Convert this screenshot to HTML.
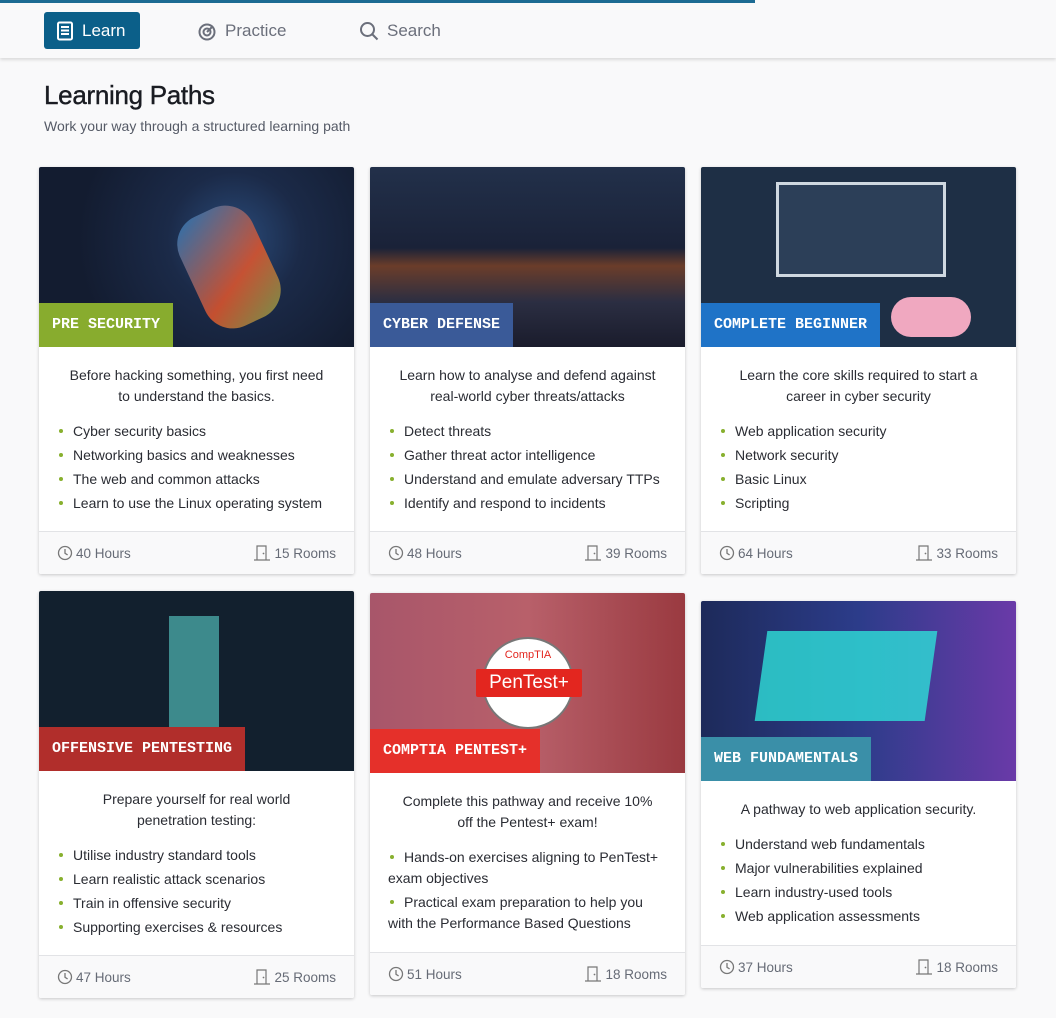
<!DOCTYPE html>
<html><head><meta charset="utf-8"><style>
*{box-sizing:border-box;margin:0;padding:0}
body{width:1056px;height:1018px;background:#f9f9fa;font-family:"Liberation Sans",sans-serif;position:relative;overflow:hidden;color:#1f2024}
.top{position:absolute;left:0;top:0;width:1056px;height:58px;background:#f9f9fa;border-top:3px solid #1c6b93;box-shadow:0 2px 3px rgba(0,0,0,.12)}
.top:after{content:"";position:absolute;left:755px;right:0;top:-3px;height:3px;background:#f9f9fa}
.nav{position:absolute;top:12px;height:37px;display:flex;align-items:center;font-size:17px;color:#6b6f7b}
.learn{left:44px;width:96px;background:#0b5f89;border-radius:3px;color:#fff;padding-left:12px}
h1{position:absolute;left:44px;top:80px;font-size:26px;font-weight:normal;color:#1a1c22;letter-spacing:-.3px;-webkit-text-stroke:.4px #1a1c22}
.sub{position:absolute;left:44px;top:118px;font-size:14px;color:#555a66}
.card{position:absolute;width:315px;background:#fff;box-shadow:0 1px 3px rgba(0,0,0,.2);border-radius:2px;overflow:hidden}
.img{height:180px;position:relative;overflow:hidden}
.lab{position:absolute;left:0;bottom:0;height:44px;line-height:44px;padding:0 13px;color:#fff;font-family:"Liberation Mono",monospace;font-weight:bold;font-size:15px;white-space:nowrap}
.desc{text-align:center;font-size:14px;line-height:21px;padding:18px 28px 0;color:#2a2c33}
ul{list-style:none;padding:14px 18px 0;font-size:14px;line-height:21px;color:#2a2c33}
li{margin-bottom:3px}
li:before{content:"";display:inline-block;vertical-align:middle;margin:0 10px 3px 2px;width:4px;height:4px;border-radius:50%;background:#88b02e}
.ft{position:absolute;left:0;right:0;bottom:0;height:43px;border-top:1px solid #e2e3e6;background:#f9f9fa;font-size:13.5px;color:#666b76;display:flex;justify-content:space-between;align-items:center;padding:0 18px}
.ft span{display:flex;align-items:center;gap:3px}
</style></head><body>
<svg width="0" height="0" style="position:absolute"><defs>
<symbol id="ck" viewBox="0 0 16 16"><circle cx="8" cy="8" r="6.5" fill="none" stroke="#777" stroke-width="1.3"/><path d="M8 4v4.3l2.6 1.6" fill="none" stroke="#777" stroke-width="1.3"/></symbol>
<symbol id="dr" viewBox="0 0 18 16"><path d="M1 15h16M4 15V1h9v14" fill="none" stroke="#777" stroke-width="1.2"/><circle cx="10.5" cy="8.5" r=".9" fill="#777"/></symbol>
</defs></svg>
<div class="top"></div>
<div class="nav learn"><svg width="18" height="20" viewBox="0 0 18 20"><rect x="2" y="1.5" width="14" height="17" rx="1.5" fill="none" stroke="#fff" stroke-width="2"/><path d="M5 6h8M5 9.5h8M5 13h8" stroke="#fff" stroke-width="2"/></svg><span style="margin-left:8px">Learn</span></div>
<div class="nav" style="left:197px"><svg width="20" height="20" viewBox="0 0 20 20"><circle cx="10" cy="11" r="7.5" fill="none" stroke="#6b6f7b" stroke-width="2"/><circle cx="10" cy="11" r="3.5" fill="none" stroke="#6b6f7b" stroke-width="2"/><path d="M10 11l6-6" stroke="#6b6f7b" stroke-width="2"/></svg><span style="margin-left:8px">Practice</span></div>
<div class="nav" style="left:359px"><svg width="20" height="20" viewBox="0 0 20 20"><circle cx="8.5" cy="8.5" r="6.5" fill="none" stroke="#6b6f7b" stroke-width="2"/><path d="M13.5 13.5l5 5" stroke="#6b6f7b" stroke-width="2"/></svg><span style="margin-left:8px">Search</span></div>
<h1>Learning Paths</h1>
<div class="sub">Work your way through a structured learning path</div>

<div class="card" style="left:39px;top:167px;height:407px">
<div class="img" style="background:radial-gradient(circle at 62% 40%,#2a4b7a 0,#1b2a48 30%,#131c30 70%)"><div style="position:absolute;left:150px;top:40px;width:80px;height:120px;background:linear-gradient(150deg,#2b7cc0,#e2562c 60%,#8aa04a);transform:rotate(-25deg);border-radius:30px;opacity:.85"></div><div class="lab" style="background:#88ac2e">PRE SECURITY</div></div>
<div class="desc">Before hacking something, you first need to understand the basics.</div>
<ul><li>Cyber security basics</li><li>Networking basics and weaknesses</li><li>The web and common attacks</li><li>Learn to use the Linux operating system</li></ul>
<div class="ft"><span><svg width="16" height="16"><use href="#ck"/></svg>40 Hours</span><span><svg width="18" height="16"><use href="#dr"/></svg>15 Rooms</span></div></div>

<div class="card" style="left:370px;top:167px;height:407px">
<div class="img" style="background:linear-gradient(180deg,#22304a 0,#1a2238 45%,#6b3d2a 55%,#2b2e42 75%,#1a1c2c)"><div class="lab" style="background:#3a5a98">CYBER DEFENSE</div></div>
<div class="desc">Learn how to analyse and defend against real-world cyber threats/attacks</div>
<ul><li>Detect threats</li><li>Gather threat actor intelligence</li><li>Understand and emulate adversary TTPs</li><li>Identify and respond to incidents</li></ul>
<div class="ft"><span><svg width="16" height="16"><use href="#ck"/></svg>48 Hours</span><span><svg width="18" height="16"><use href="#dr"/></svg>39 Rooms</span></div></div>

<div class="card" style="left:701px;top:167px;height:407px">
<div class="img" style="background:#1e2f45"><div style="position:absolute;left:75px;top:15px;width:170px;height:95px;background:#2c3f58;border:3px solid #cfd8e0"></div><div style="position:absolute;left:190px;top:130px;width:80px;height:40px;background:#f0a8c0;border-radius:20px"></div><div class="lab" style="background:#1f73c7">COMPLETE BEGINNER</div></div>
<div class="desc">Learn the core skills required to start a career in cyber security</div>
<ul><li>Web application security</li><li>Network security</li><li>Basic Linux</li><li>Scripting</li></ul>
<div class="ft"><span><svg width="16" height="16"><use href="#ck"/></svg>64 Hours</span><span><svg width="18" height="16"><use href="#dr"/></svg>33 Rooms</span></div></div>

<div class="card" style="left:39px;top:591px;height:407px">
<div class="img" style="background:#12202e"><div style="position:absolute;left:130px;top:25px;width:50px;height:115px;background:#3d8a8c"></div><div class="lab" style="background:#b12e2b">OFFENSIVE PENTESTING</div></div>
<div class="desc">Prepare yourself for real world penetration testing:</div>
<ul><li>Utilise industry standard tools</li><li>Learn realistic attack scenarios</li><li>Train in offensive security</li><li>Supporting exercises &amp; resources</li></ul>
<div class="ft"><span><svg width="16" height="16"><use href="#ck"/></svg>47 Hours</span><span><svg width="18" height="16"><use href="#dr"/></svg>25 Rooms</span></div></div>

<div class="card" style="left:370px;top:593px;height:402px">
<div class="img" style="background:linear-gradient(90deg,#a8566a,#b8606a 50%,#9a3a40)"><div style="position:absolute;left:112px;top:44px;width:92px;height:92px;border-radius:50%;background:#fff;border:2px solid #777"></div><div style="position:absolute;left:106px;top:76px;width:106px;height:28px;background:#e3261f;color:#fff;font-size:19px;text-align:center;line-height:28px;border-radius:2px">PenTest+</div><div style="position:absolute;left:120px;top:56px;width:76px;text-align:center;color:#e3261f;font-size:11px">CompTIA</div><div class="lab" style="background:#e5302a">COMPTIA PENTEST+</div></div>
<div class="desc">Complete this pathway and receive 10% off the Pentest+ exam!</div>
<ul><li>Hands-on exercises aligning to PenTest+ exam objectives</li><li>Practical exam preparation to help you with the Performance Based Questions</li></ul>
<div class="ft"><span><svg width="16" height="16"><use href="#ck"/></svg>51 Hours</span><span><svg width="18" height="16"><use href="#dr"/></svg>18 Rooms</span></div></div>

<div class="card" style="left:701px;top:601px;height:387px">
<div class="img" style="background:linear-gradient(90deg,#1d2a5a,#2c3c8a 50%,#6a3aa8)"><div style="position:absolute;left:60px;top:30px;width:170px;height:90px;background:#2ee0d8;opacity:.8;transform:skewX(-8deg)"></div><div class="lab" style="background:#3a8fa8">WEB FUNDAMENTALS</div></div>
<div class="desc">A pathway to web application security.</div>
<ul><li>Understand web fundamentals</li><li>Major vulnerabilities explained</li><li>Learn industry-used tools</li><li>Web application assessments</li></ul>
<div class="ft"><span><svg width="16" height="16"><use href="#ck"/></svg>37 Hours</span><span><svg width="18" height="16"><use href="#dr"/></svg>18 Rooms</span></div></div>
</body></html>
